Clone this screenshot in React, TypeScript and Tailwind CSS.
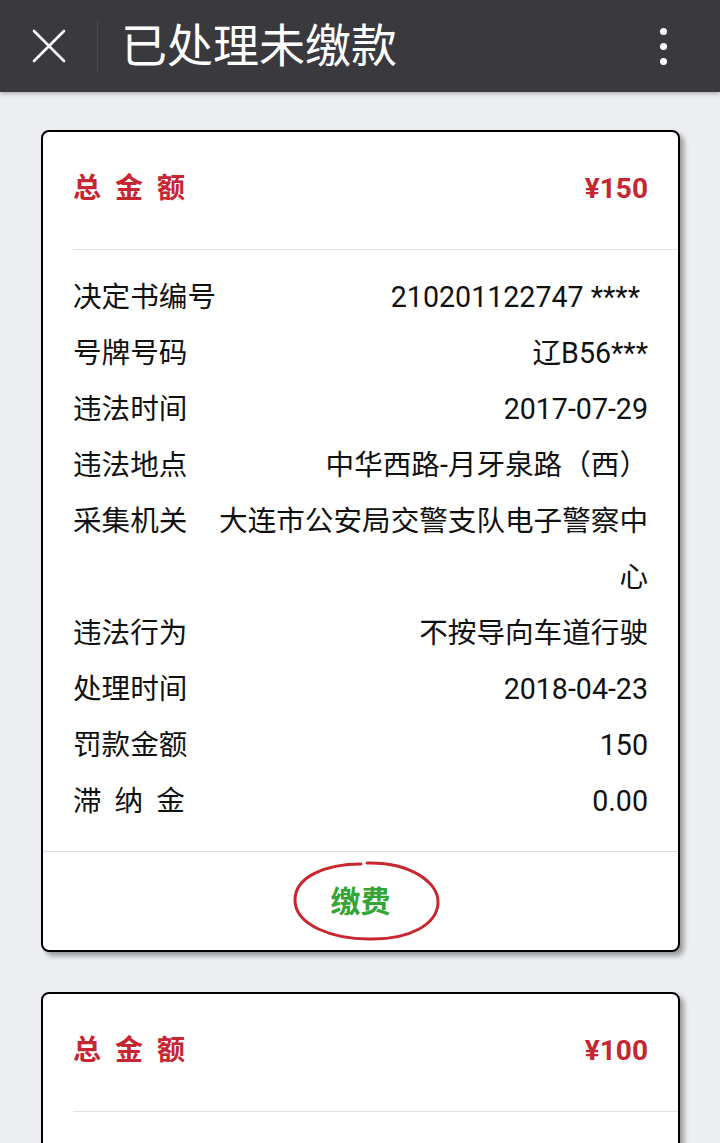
import React from "react";

const CJK = "font-['Roboto','Noto_Sans_CJK_SC',sans-serif]";

type Row = { label: string; value: string; spaced?: boolean; pad?: boolean };

const rows1: Row[] = [
  { label: "决定书编号", value: "210201122747 ****", pad: true },
  { label: "号牌号码", value: "辽B56***" },
  { label: "违法时间", value: "2017-07-29" },
  { label: "违法地点", value: "中华西路-月牙泉路（西）" },
  { label: "采集机关", value: "大连市公安局交警支队电子警察中心" },
  { label: "违法行为", value: "不按导向车道行驶" },
  { label: "处理时间", value: "2018-04-23" },
  { label: "罚款金额", value: "150" },
  { label: "滞纳金", value: "0.00", spaced: true },
];

function Card({ amount, rows, showPay }: { amount: string; rows: Row[]; showPay: boolean }) {
  return (
    <div className="rounded-[8px] border-2 border-black bg-white shadow-[4px_4px_5px_rgba(0,0,0,0.35)]">
      <div className="ml-[30px] flex items-center justify-between border-b border-[#e2e2e4] pt-[39px] pb-[42px] pr-[30px]">
        <span className="text-[28px] font-bold leading-[36px] tracking-[14px] text-[#c62631]">总金额</span>
        <span className="text-[28px] font-bold leading-[36px] text-[#c62631]">{amount}</span>
      </div>
      <div className="px-[30px] pt-[19px] pb-[22px]">
        {rows.map((r) => (
          <div key={r.label} className="flex text-[28.6px] leading-[56px] text-[#111]">
            <div className={`w-[144px] shrink-0 whitespace-nowrap ${r.spaced ? "tracking-[13px]" : ""}`}>{r.label}</div>
            <div className={`min-w-0 flex-1 text-right ${r.pad ? "pr-[8px]" : ""}`}>{r.value}</div>
          </div>
        ))}
      </div>
      {showPay && (
        <div className="relative flex h-[99px] items-center justify-center border-t border-[#dcdcde]">
          <span className="pt-[2px] text-[30px] font-bold leading-none text-[#34a534]">缴费</span>
          <svg className="absolute left-[248px] top-[7px]" width="152" height="84" viewBox="0 0 152 84">
            <path
              d="M76 4 C120 3 148 24 147 44 C146 66 118 80 82 80 C42 81 4 66 4 41 C4 18 34 5 70 5"
              fill="none"
              stroke="#c9262f"
              strokeWidth="3"
              strokeLinecap="round"
            />
          </svg>
        </div>
      )}
    </div>
  );
}

export default function App() {
  return (
    <div className={`relative h-[1143px] w-[720px] overflow-hidden bg-[#eceef1] ${CJK}`}>
      <div className="relative z-10 flex h-[92px] items-center bg-[#3a393e] shadow-[0_2px_4px_rgba(0,0,0,0.25)]">
        <div className="flex w-[97px] items-center justify-center">
          <svg width="34" height="34" viewBox="0 0 34 34">
            <path d="M2 2 L32 32 M32 2 L2 32" stroke="#fff" strokeWidth="2.6" strokeLinecap="round" />
          </svg>
        </div>
        <div className="h-[52px] w-px bg-[#48474d]" />
        <div className="ml-[23px] flex-1 text-[46px] leading-none text-white">已处理未缴款</div>
        <div className="mr-[53px] flex flex-col items-center gap-[8px]">
          <span className="h-[7px] w-[7px] rounded-full bg-white" />
          <span className="h-[7px] w-[7px] rounded-full bg-white" />
          <span className="h-[7px] w-[7px] rounded-full bg-white" />
        </div>
      </div>
      <div className="flex flex-col gap-[40px] pl-[41px] pr-[40px] pt-[38px]">
        <Card amount="¥150" rows={rows1} showPay />
        <Card amount="¥100" rows={rows1} showPay />
      </div>
    </div>
  );
}
